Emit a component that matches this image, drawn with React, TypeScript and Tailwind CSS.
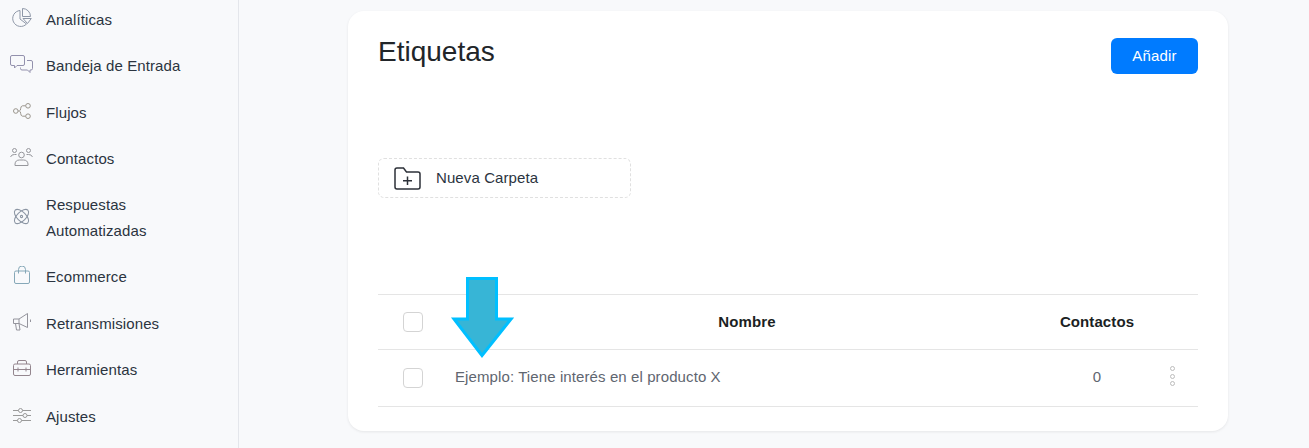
const font = 'font-["Liberation_Sans",Arial,sans-serif]';

function IconPie() {
  return (
    <svg width="20" height="19" viewBox="0 0 20 19" fill="none" stroke="#8f98a8" strokeWidth="1">
      <path d="M8 2.500a8 8 0 1 0 6.500 13.500L8 11z" />
      <path d="M10.500 .500a8 8 0 0 1 8 8h-8z" />
      <path d="M11 10.500h8.300l-3.800 5z" />
    </svg>
  );
}

function IconChat() {
  return (
    <svg width="23" height="18" viewBox="0 0 23 18" fill="none" stroke="#9391ad" strokeWidth="1">
      <path d="M2 .500h11a1.500 1.500 0 0 1 1.500 1.500v7A1.500 1.500 0 0 1 13 10.500H7l-2.500 2.500v-2.500H2A1.500 1.500 0 0 1 .500 9V2A1.500 1.500 0 0 1 2 .500z" />
      <path d="M17 5.500h4A1.500 1.500 0 0 1 22.500 7v6.500A1.500 1.500 0 0 1 21 15h-1v2.500L17.500 15H12a1.500 1.500 0 0 1-1.500-1.500v-1" />
    </svg>
  );
}

function IconFlow() {
  return (
    <svg width="18" height="16" viewBox="0 0 18 16" fill="none" stroke="#9a958c" strokeWidth="1">
      <circle cx="2.800" cy="8" r="2.300" />
      <circle cx="15" cy="2.800" r="2.300" />
      <circle cx="15" cy="13.200" r="2.300" />
      <path d="M5 8h1.500c1.700 0 .5-5.200 3-5.200h3M6.500 8c1.700 0 .5 5.200 3 5.200h3" />
    </svg>
  );
}

function IconUsers() {
  return (
    <svg width="23" height="18" viewBox="0 0 23 18" fill="none" stroke="#96979c" strokeWidth="1">
      <circle cx="11.500" cy="7" r="2.800" />
      <circle cx="4.500" cy="2.500" r="2" />
      <circle cx="18.500" cy="2.500" r="2" />
      <path d="M5 17.500v-1.500a4.500 4.500 0 0 1 4.500-4h4a4.500 4.500 0 0 1 4.500 4v1.500z" />
      <path d="M.500 9a4 4 0 0 1 4-2.500h2M22.500 9a4 4 0 0 0-4-2.500h-2" />
    </svg>
  );
}

function IconAtom() {
  return (
    <svg width="17" height="17" viewBox="0 0 18 18" fill="none" stroke="#8b95a3" strokeWidth="1.100">
      <ellipse cx="9" cy="9" rx="9.500" ry="4.800" transform="rotate(45 9 9)" />
      <ellipse cx="9" cy="9" rx="9.500" ry="4.800" transform="rotate(-45 9 9)" />
      <circle cx="9" cy="9" r="1.200" />
    </svg>
  );
}

function IconBag() {
  return (
    <svg width="16" height="18" viewBox="0 0 16 18" fill="none" stroke="#86a8b8" strokeWidth="1">
      <rect x=".500" y="5" width="15" height="12.500" rx="1.500" />
      <path d="M4.500 7.500V3.500a3.500 3.500 0 0 1 7 0v4" />
    </svg>
  );
}

function IconMegaphone() {
  return (
    <svg width="18" height="18" viewBox="0 0 18 18" fill="none" stroke="#94949c" strokeWidth="1">
      <path d="M.500 6h5.500L14.500 .500v14L6 10.500H.500z" />
      <path d="M6 6v4.500M2.500 10.500l1 6.500h3.500l-1-6.500M17.500 6.500v2.500" />
    </svg>
  );
}

function IconCase() {
  return (
    <svg width="18" height="16" viewBox="0 0 18 16" fill="none" stroke="#94868e" strokeWidth="1">
      <rect x=".500" y="4" width="17" height="11.500" rx="1.500" />
      <path d="M4.500 4V2A1.500 1.500 0 0 1 6 .500h6A1.500 1.500 0 0 1 13.500 2v2M.500 9.500h17M5 7.500v4M13 7.500v4" />
    </svg>
  );
}

function IconSliders() {
  return (
    <svg width="18" height="15" viewBox="0 0 18 15" fill="none" stroke="#9a9a9a" strokeWidth="1">
      <path d="M0 2.500h5.500M9.500 2.500H18M0 7.500h10M14 7.500h4M0 12.500h4.500M8.500 12.500H18" />
      <circle cx="7.500" cy="2.500" r="2" />
      <circle cx="12" cy="7.500" r="2" />
      <circle cx="6.500" cy="12.500" r="2" />
    </svg>
  );
}

function IconFolderPlus() {
  return (
    <svg width="27" height="23" viewBox="0 0 27 23" fill="none" stroke="#2c3038" strokeWidth="1.500">
      <path d="M1 3A2 2 0 0 1 3 1h6.500l3 4H24a2 2 0 0 1 2 2v13a2 2 0 0 1-2 2H3a2 2 0 0 1-2-2z" />
      <path d="M13.500 9.500v8.500M9 13.750h9" />
    </svg>
  );
}

const navItems = [
  { label: 'Analíticas', icon: <IconPie /> },
  { label: 'Bandeja de Entrada', icon: <IconChat /> },
  { label: 'Flujos', icon: <IconFlow /> },
  { label: 'Contactos', icon: <IconUsers /> },
  { label: 'Respuestas Automatizadas', icon: <IconAtom />, tall: true },
  { label: 'Ecommerce', icon: <IconBag /> },
  { label: 'Retransmisiones', icon: <IconMegaphone /> },
  { label: 'Herramientas', icon: <IconCase /> },
  { label: 'Ajustes', icon: <IconSliders /> },
];

function Checkbox() {
  return <div className="h-5 w-5 rounded-[4px] border border-[#d4d4d4] bg-white" />;
}

export default function App() {
  return (
    <div className={`flex h-[448px] overflow-hidden bg-[#f8f9fb] ${font}`}>
      {/* Sidebar */}
      <aside className="-mt-[3.400px] w-[239px] shrink-0 border-r border-[#e4e6eb]">
        {navItems.map((item) => (
          <div key={item.label} className={item.tall ? 'flex items-center py-[10px]' : 'flex items-center py-[10.200px] last:mt-[0.600px]'}>
            <div className="mb-1 flex w-[46px] shrink-0 justify-center pr-[3px]">{item.icon}</div>
            <span className="w-[150px] text-[15px] leading-[26px] tracking-[0.1px] text-[#2b3440]">{item.label}</span>
          </div>
        ))}
      </aside>

      {/* Main */}
      <main className="flex-1 pl-[109px] pt-[11px]">
        <div className="h-[420px] w-[880px] rounded-2xl bg-white px-[30px] shadow-[0_1px_3px_rgba(0,0,0,0.08)]">
          <div className="flex items-start justify-between pt-[27px]">
            <h1 className="text-[28px] leading-[28px] text-[#212529]">Etiquetas</h1>
            <button className="h-9 w-[87px] rounded-md bg-[#007bff] text-[15px] tracking-[0.2px] text-white">Añadir</button>
          </div>

          <button className="mt-[84px] flex h-10 w-[253px] items-center gap-[15px] rounded-md border border-dashed border-[#e0e0e0] pl-[15px] text-[15px] tracking-[0.1px] text-[#2b3440]">
            <IconFolderPlus />
            Nueva Carpeta
          </button>

          {/* Table */}
          <div className="relative mt-[96px] border-t border-[#e5e5e5]">
            <div className="flex h-[55px] items-center border-b border-[#e5e5e5] text-[15px] font-bold tracking-[0.1px] text-[#1c1f23]">
              <div className="w-[77px] pl-[25px]"><Checkbox /></div>
              <div className="w-[584px] text-center">Nombre</div>
              <div className="w-[116px] text-center">Contactos</div>
            </div>
            <div className="flex h-[57px] items-center border-b border-[#e5e5e5] text-[15px] tracking-[0.1px] text-[#5f6670]">
              <div className="w-[77px] pl-[25px]"><Checkbox /></div>
              <div className="mb-[2px] w-[584px]">Ejemplo: Tiene interés en el producto X</div>
              <div className="mb-[2px] w-[116px] text-center">0</div>
              <div className="mb-1 ml-[15px] flex flex-col gap-[2.500px]">
                <span className="h-[5px] w-[5px] rounded-full border-[1.500px] border-[#bcbcbc]" />
                <span className="h-[5px] w-[5px] rounded-full border-[1.500px] border-[#bcbcbc]" />
                <span className="h-[5px] w-[5px] rounded-full border-[1.500px] border-[#bcbcbc]" />
              </div>
            </div>

            {/* Arrow annotation */}
            <svg className="absolute left-[72px] top-[-18px]" width="64" height="84" viewBox="0 0 64 84">
              <path d="M17.500 1.500h29v40.500h14.500L32 78.500 4 42h13.500z" fill="#37b5d6" stroke="#00bfff" strokeWidth="3" />
            </svg>
          </div>
        </div>
      </main>
    </div>
  );
}
